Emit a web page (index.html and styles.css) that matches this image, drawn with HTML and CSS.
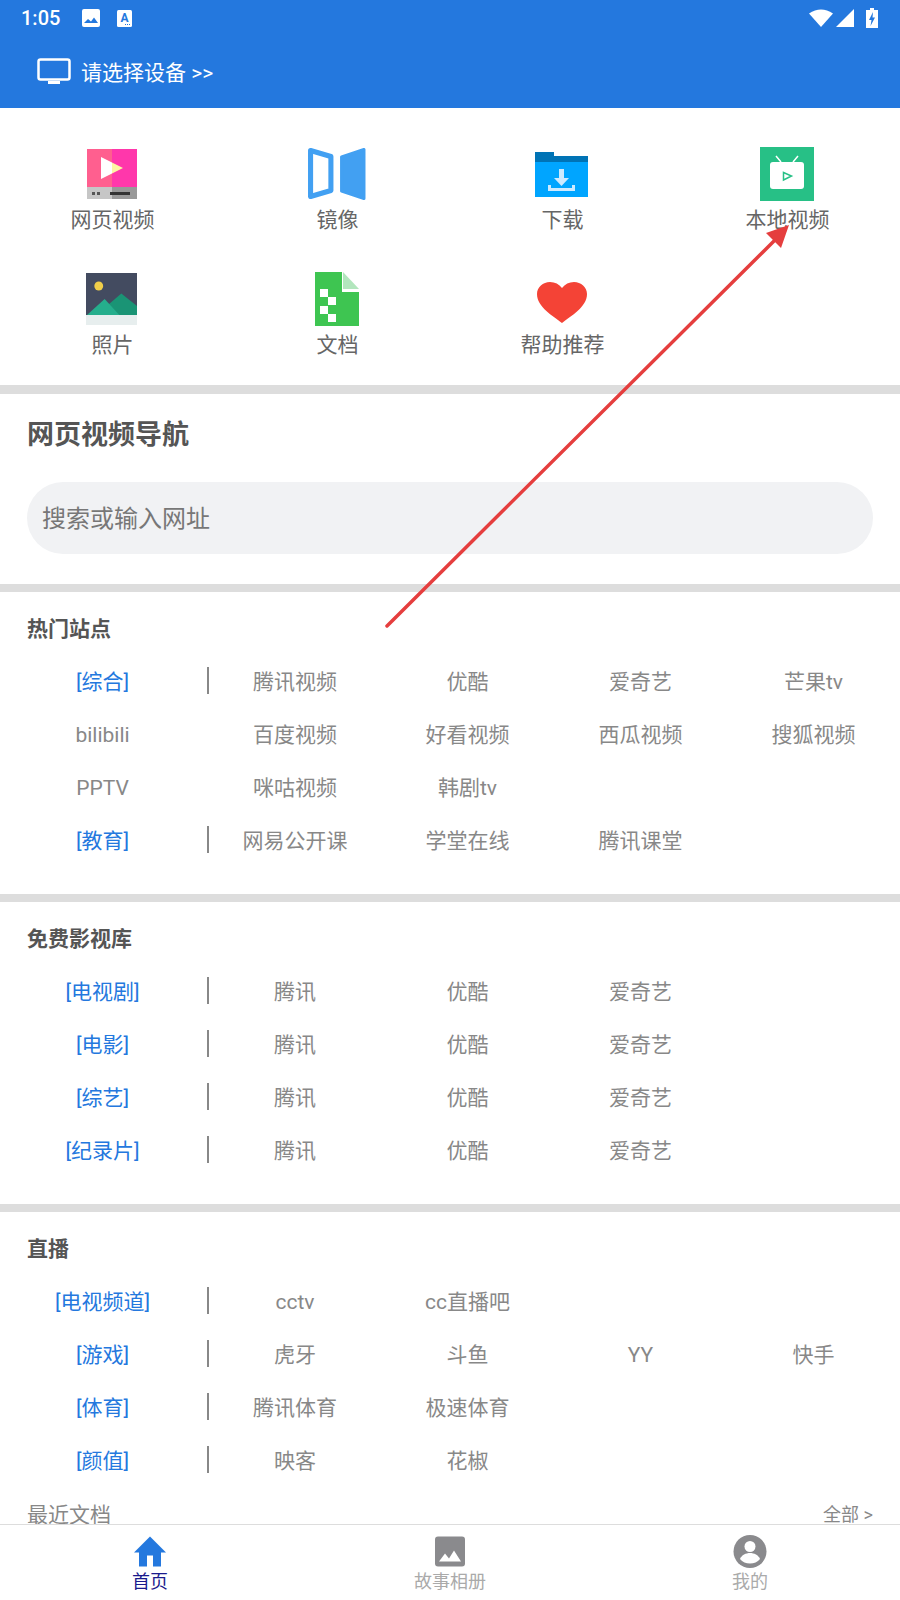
FILE: index.html
```html
<!DOCTYPE html>
<html lang="zh-CN">
<head>
    <meta charset="UTF-8">
    <meta name="viewport" content="width=device-width, initial-scale=1.0">
    <title>投屏</title>
    <link rel="stylesheet" href="styles.css">
</head>
<body>
<div class="app">

    <!-- Header -->
    <header class="header">
        <div class="status-bar">
            <span class="time">1:05</span>
            <svg class="st-img" width="18" height="18" viewBox="0 0 18 18"><rect width="18" height="18" rx="2" fill="#fff"/><path d="M2 14l4-4 3 2.500 3-4 4 5.500z" fill="#2478de"/></svg>
            <svg class="st-a" width="15" height="17" viewBox="0 0 15 17"><rect width="15" height="17" rx="1.500" fill="#fff"/><text x="7.500" y="11.500" class="st-a-letter">A</text><path d="M8 14h1v1H8zM10 14h1v1h-1zM12 14h1v1h-1z" fill="#2478de"/></svg>
            <span class="status-right">
                <svg width="24" height="18" viewBox="0 0 24 18"><path d="M0 4.500Q12-3.500 24 4.500L12 18z" fill="#fff"/></svg>
                <svg width="18" height="18" viewBox="0 0 18 18"><path d="M18 0v18H0z" fill="#fff"/></svg>
                <svg class="st-batt" width="12" height="20" viewBox="0 0 12 20"><path d="M4 0h4v2h4v18H0V2h4z" fill="#fff"/><path d="M7 4L3 12h2.500L4.500 18 9 9.500H6.500z" fill="#2478de"/></svg>
            </span>
        </div>
        <div class="device-bar">
            <svg width="34" height="27" viewBox="0 0 34 27"><rect x="1.500" y="1.500" width="31" height="20" rx="2" fill="none" stroke="#fff" stroke-width="2.500"/><rect x="11" y="23" width="12" height="3" fill="#fff"/></svg>
            <span>请选择设备 &gt;&gt;</span>
        </div>
    </header>

    <div class="main">

        <!-- Feature icons -->
        <section class="features">
            <div class="feature">
                <div class="feature-icon">
                    <svg width="50" height="50" viewBox="0 0 50 50"><rect width="25" height="38" fill="#ff5f8f"/><rect x="25" width="25" height="38" fill="#ff37ab"/><rect y="38" width="25" height="12" fill="#c6c6c6"/><rect x="25" y="38" width="25" height="12" fill="#999"/><path d="M14 8L25 13.500V24.500L14 30z" fill="#fff"/><path d="M25 13.500L36 19 25 24.500z" fill="#fdf6a3"/><rect x="5" y="43" width="3" height="3" fill="#555"/><rect x="10" y="43" width="3" height="3" fill="#555"/><rect x="23" y="43" width="20" height="3" fill="#333"/></svg>
                </div>
                <span>网页视频</span>
            </div>
            <div class="feature">
                <div class="feature-icon">
                    <svg width="59" height="54" viewBox="0 0 58 54" preserveAspectRatio="none"><path d="M3.500 3.500L23.500 9.500V43.500L3.500 49.500z" fill="none" stroke="#42a0f2" stroke-width="5" stroke-linejoin="round"/><path d="M34 10L56 2.500V51.500L34 44z" fill="#42a0f2" stroke="#42a0f2" stroke-width="3" stroke-linejoin="round"/></svg>
                </div>
                <span>镜像</span>
            </div>
            <div class="feature">
                <div class="feature-icon">
                    <svg width="53" height="45" viewBox="0 0 53 45"><path d="M0 0h19v4h34v7H0z" fill="#0073b5"/><rect y="10" width="53" height="35" fill="#00a5ff"/><path d="M24 17h5v9h5l-7.500 8-7.500-8h5z" fill="#cdeaff"/><path d="M13 33h3v3h21v-3h3v6H13z" fill="#cdeaff"/></svg>
                </div>
                <span>下载</span>
            </div>
            <div class="feature">
                <div class="feature-icon">
                    <svg width="54" height="54" viewBox="0 0 54 54"><rect width="54" height="54" fill="#27c086"/><path d="M16 9l5 6M38 9l-5 6" stroke="#fff" stroke-width="1.500"/><rect x="10" y="15" width="34" height="27" rx="3" fill="#fff"/><path d="M23.500 25.500L31.500 29 23.500 33z" fill="none" stroke="#27c086" stroke-width="1.500"/></svg>
                </div>
                <span>本地视频</span>
            </div>
            <div class="feature">
                <div class="feature-icon">
                    <svg width="51" height="52" viewBox="0 0 52 52" preserveAspectRatio="none"><rect width="52" height="42" fill="#434b60"/><rect y="42" width="52" height="10" fill="#e7eeee"/><circle cx="13" cy="13" r="4.500" fill="#f0ce4a"/><path d="M20 34L36 20.500 52 33V42H24z" fill="#1a9475"/><path d="M1 42L19 26 34 42z" fill="#25ae8c"/></svg>
                </div>
                <span>照片</span>
            </div>
            <div class="feature">
                <div class="feature-icon">
                    <svg width="44" height="54" viewBox="0 0 44 54"><path d="M0 0H27V20H44V54H0z" fill="#3ec551"/><path d="M28 0L44 17H28z" fill="#b2e6bd"/><path d="M5 17h8v8H5zM13 25h8v8h-8zM5 34h8v8H5zM13 42h8v8h-8z" fill="#fff"/></svg>
                </div>
                <span>文档</span>
            </div>
            <div class="feature">
                <div class="feature-icon">
                    <svg class="heart" width="50" height="41" viewBox="0 0 50 41"><path d="M25 41C16 34 0 25 0 12 0 5 6 0 13 0 18 0 22 2 25 6 28 2 32 0 37 0 44 0 50 5 50 12 50 25 34 34 25 41z" fill="#f44336"/></svg>
                </div>
                <span>帮助推荐</span>
            </div>
        </section>

        <!-- Search -->
        <section class="nav-head">
            <h2>网页视频导航</h2>
            <div class="search">搜索或输入网址</div>
        </section>

        <section class="block">
            <h3>热门站点</h3>
            <div class="row"><span class="cat">[综合]</span><span>腾讯视频</span><span>优酷</span><span>爱奇艺</span><span>芒果tv</span></div>
            <div class="row"><span class="cat plain">bilibili</span><span>百度视频</span><span>好看视频</span><span>西瓜视频</span><span>搜狐视频</span></div>
            <div class="row"><span class="cat plain">PPTV</span><span>咪咕视频</span><span>韩剧tv</span></div>
            <div class="row"><span class="cat">[教育]</span><span>网易公开课</span><span>学堂在线</span><span>腾讯课堂</span></div>
        </section>

        <section class="block">
            <h3>免费影视库</h3>
            <div class="row"><span class="cat">[电视剧]</span><span>腾讯</span><span>优酷</span><span>爱奇艺</span></div>
            <div class="row"><span class="cat">[电影]</span><span>腾讯</span><span>优酷</span><span>爱奇艺</span></div>
            <div class="row"><span class="cat">[综艺]</span><span>腾讯</span><span>优酷</span><span>爱奇艺</span></div>
            <div class="row"><span class="cat">[纪录片]</span><span>腾讯</span><span>优酷</span><span>爱奇艺</span></div>
        </section>

        <section class="block last">
            <h3>直播</h3>
            <div class="row"><span class="cat">[电视频道]</span><span>cctv</span><span>cc直播吧</span></div>
            <div class="row"><span class="cat">[游戏]</span><span>虎牙</span><span>斗鱼</span><span>YY</span><span>快手</span></div>
            <div class="row"><span class="cat">[体育]</span><span>腾讯体育</span><span>极速体育</span></div>
            <div class="row"><span class="cat">[颜值]</span><span>映客</span><span>花椒</span></div>
            <div class="recent"><span>最近文档</span><span class="recent-all">全部 &gt;</span></div>
        </section>
    </div>

    <!-- Bottom tabs -->
    <nav class="tabs">
        <div class="tab active">
            <svg width="34" height="32" viewBox="0 0 34 32"><path d="M17 1L33 17H28V31H20V20H14V31H6V17H1z" fill="#2478de"/></svg>
            <span>首页</span>
        </div>
        <div class="tab">
            <svg width="30" height="30" viewBox="0 0 30 30"><rect width="30" height="30" rx="3" fill="#8a8a8d"/><path d="M4 25l6-8 4 5 5-8 7 11z" fill="#fff"/></svg>
            <span>故事相册</span>
        </div>
        <div class="tab">
            <svg width="34" height="33" viewBox="0 0 34 33"><circle cx="17" cy="16.500" r="16.500" fill="#8a8a8d"/><circle cx="17" cy="11.500" r="5.500" fill="#fff"/><path d="M7 24c1.500-4 6-6 10-6s8.500 2 10 6c-2.500 3-6 4.500-10 4.500S9.500 27 7 24z" fill="#fff"/></svg>
            <span>我的</span>
        </div>
    </nav>

    <!-- Annotation arrow -->
    <svg class="arrow" width="900" height="700" viewBox="0 0 900 700"><path d="M387 626L778 237" stroke="#e53e3e" stroke-width="3.500" stroke-linecap="round"/><path d="M789 225L766 233 781 248z" fill="#e53e3e"/></svg>
</div>
</body>
</html>
```

FILE: styles.css
```css
* { box-sizing: border-box; }

body {
    margin: 0;
    font-family: Roboto, "Noto Sans CJK SC", sans-serif;
    background: #fff;
    color: #888;
}

.app {
    position: relative;
    width: 900px;
    height: 1600px;
    display: flex;
    flex-direction: column;
    overflow: hidden;
}

/* Header */
.header {
    height: 108px;
    flex: none;
    background: #2478de;
    color: #fff;
}
.status-bar {
    height: 36px;
    display: flex;
    align-items: center;
    padding: 0 22px 0 21px;
}
.time { font-size: 20px; font-weight: 500; width: 61px; }
.st-a { margin-left: 17px; }
.st-a-letter {
    font-family: Roboto, sans-serif;
    font-size: 12px;
    font-weight: 700;
    text-anchor: middle;
    fill: #2478de;
}
.status-right {
    margin-left: auto;
    display: flex;
    align-items: center;
    gap: 3px;
}
.st-batt { margin-left: 9px; }
.device-bar {
    height: 72px;
    display: flex;
    align-items: center;
    gap: 10px;
    padding: 0 0 2px 37px;
    font-size: 21px;
}

.main {
    flex: 1;
    min-height: 0;
    overflow: hidden;
}

/* Feature icons */
.features {
    display: grid;
    grid-template-columns: repeat(4, 225px);
    grid-auto-rows: 92px;
    row-gap: 33px;
    padding-top: 38px;
    border-bottom: 9px solid #ddd;
    height: 286px;
}
.feature {
    display: flex;
    flex-direction: column;
    align-items: center;
    font-size: 21px;
    line-height: 36px;
    color: #666;
}
.feature-icon {
    height: 56px;
    flex: none;
    margin-right: 2px;
    display: flex;
    align-items: center;
    justify-content: center;
}
.heart { margin-top: 6px; }

/* Search */
.nav-head {
    height: 198px;
    padding: 23px 27px 0;
    border-bottom: 8px solid #ddd;
}
.nav-head h2 {
    margin: 0 0 29px;
    font-size: 27px;
    line-height: 36px;
    font-weight: 700;
    color: #555;
}
.search {
    height: 72px;
    line-height: 74px;
    padding-left: 15px;
    border-radius: 36px;
    background: #f1f2f4;
    font-size: 24px;
    color: #777;
}

/* Link blocks */
.block {
    height: 310px;
    padding-top: 22px;
    border-bottom: 8px solid #ddd;
}
.block.last { border-bottom: none; }
.block h3 {
    margin: 0 0 12px 27px;
    font-size: 21px;
    line-height: 30px;
    font-weight: 700;
    color: #555;
}
.row {
    display: grid;
    grid-template-columns: 209px 172px repeat(3, 173px);
    height: 53px;
    align-items: center;
    font-size: 21px;
    line-height: 27px;
    text-align: center;
}
.cat {
    height: 27px;
    line-height: 31px;
    margin-bottom: 4px;
    padding-right: 2px;
    color: #2478de;
    border-right: 2px solid #888;
}
.cat.plain {
    color: #888;
    border-right-color: transparent;
}

.recent {
    display: flex;
    justify-content: space-between;
    align-items: center;
    height: 50px;
    padding: 0 27px;
    font-size: 21px;
}
.recent-all { font-size: 18px; }

/* Bottom tabs */
.tabs {
    height: 76px;
    flex: none;
    display: flex;
    border-top: 1px solid #ddd;
    background: #fff;
}
.tab {
    flex: 1;
    display: flex;
    flex-direction: column;
    align-items: center;
    padding-top: 10px;
    font-size: 18px;
    line-height: 24px;
    color: #aaa;
}
.tab svg { height: 33px; margin-bottom: 2px; }
.tab.active { color: #1a1a8c; }

/* Annotation sits over the page */
.arrow {
    position: absolute;
    top: 0;
    left: 0;
    pointer-events: none;
}
```
